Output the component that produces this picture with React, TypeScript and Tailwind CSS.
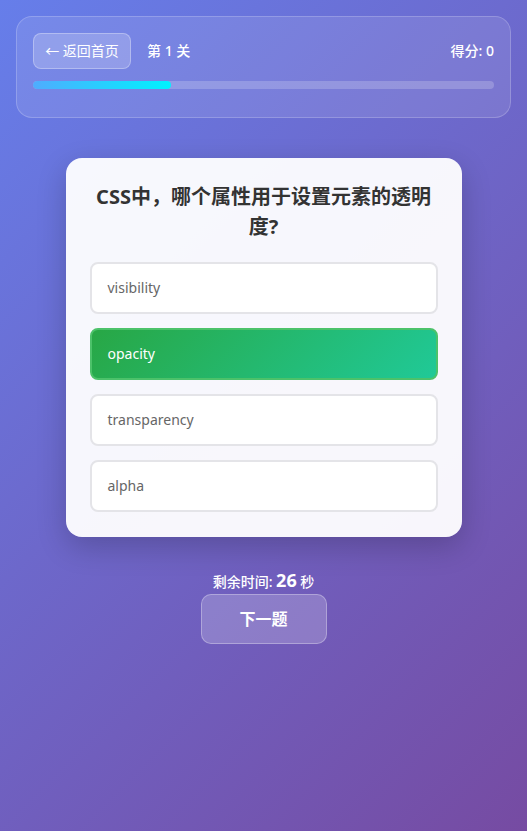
import React from "react";

const options = ["visibility", "opacity", "transparency", "alpha"];

export default function App() {
  return (
    <div
      className="min-h-[831px] w-full bg-[linear-gradient(135deg,#667eea_0%,#764ba2_100%)] p-4 text-white"
      style={{ fontFamily: '"Noto Sans", "Noto Sans CJK SC", sans-serif' }}
    >
      <div className="rounded-2xl border border-white/20 bg-white/10 px-4 pb-7 pt-4">
        <div className="flex items-center">
          <button className="flex h-9 w-[98px] items-center justify-center rounded-lg border border-white/30 bg-white/20 text-sm text-white">
            ← 返回首页
          </button>
          <span className="ml-4 text-sm font-medium">第 1 关</span>
          <span className="ml-auto text-sm font-medium">得分: 0</span>
        </div>
        <div className="mt-3 h-2 w-full overflow-hidden rounded-full bg-white/20">
          <div className="h-full w-[30%] rounded-full bg-[linear-gradient(90deg,#4facfe,#00f2fe)]" />
        </div>
      </div>

      <div className="mx-auto mt-10 w-[396px] rounded-2xl bg-white/95 px-6 pb-[25px] pt-6 shadow-[0_10px_30px_rgba(0,0,0,0.2)]">
        <h2 className="mb-5 text-center text-xl font-bold leading-[30px] text-[#333]">
          CSS中，哪个属性用于设置元素的透明度?
        </h2>
        <div className="flex flex-col gap-[14px]">
          {options.map((o) =>
            o === "opacity" ? (
              <div
                key={o}
                className="flex h-[52px] items-center rounded-lg border-2 border-[#4cc26a] bg-[linear-gradient(135deg,#28a745,#20c997)] px-4 text-sm text-white"
              >
                {o}
              </div>
            ) : (
              <div
                key={o}
                className="flex h-[52px] items-center rounded-lg border-2 border-[#e4e4e8] bg-white px-4 text-sm text-[#666]"
              >
                {o}
              </div>
            )
          )}
        </div>
      </div>

      <div className="mt-[29px] flex flex-col items-center">
        <div className="text-sm font-medium leading-[24px]">
          剩余时间: <span className="text-lg font-bold">26</span> 秒
        </div>
        <button className="flex h-[50px] w-[126px] items-center justify-center rounded-[10px] border border-white/30 bg-white/20 text-base font-bold text-white">
          下一题
        </button>
      </div>
    </div>
  );
}
